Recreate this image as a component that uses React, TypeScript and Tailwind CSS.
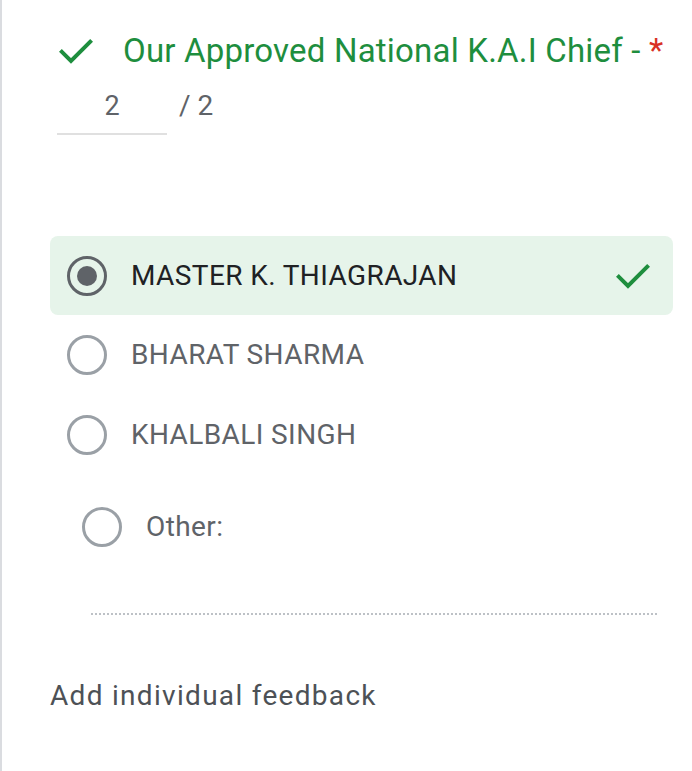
import React from 'react';

const Check = ({ className }: { className?: string }) => (
  <svg viewBox="0 0 24 24" className={className} fill="none" stroke="currentColor" strokeWidth={2.4} strokeLinecap="square">
    <path d="M3.5 12.5l5.5 5.5L20.5 6.5" />
  </svg>
);

const Radio = ({ checked }: { checked?: boolean }) => (
  <span
    className={`flex h-[40px] w-[40px] shrink-0 items-center justify-center rounded-full border-[3px] ${
      checked ? 'border-[#5f6368]' : 'border-[#9aa0a6]'
    }`}
  >
    {checked && <span className="h-[20px] w-[20px] rounded-full bg-[#5f6368]" />}
  </span>
);

const options = ['BHARAT SHARMA', 'KHALBALI SINGH'];

export default function App() {
  return (
    <div
      className="flex min-h-[771px] w-[692px] border-l-2 border-[#dadce0] bg-white"
      style={{ fontFamily: 'Roboto, "Liberation Sans", sans-serif' }}
    >
      <div className="flex w-full flex-col pl-[48px] pr-[19px]">
        {/* Question title */}
        <div className="mt-[31px] flex items-center pl-[6px]">
          <Check className="h-[40px] w-[40px] text-[#1e8e3e]" />
          <h2 className="ml-[27px] whitespace-nowrap text-[33px] leading-[36px] tracking-[0.2px] text-[#1e8e3e]">
            Our Approved National K.A.I Chief - <span className="text-[#d93025]">*</span>
          </h2>
        </div>

        {/* Points */}
        <div className="mt-[20px] flex items-start pl-[7px]">
          <div className="w-[110px] border-b-2 border-[#e0e0e0] pb-[12px] text-center text-[27px] leading-[30px] text-[#5f6368]">
            2
          </div>
          <span className="ml-[12px] text-[28px] leading-[30px] text-[#5f6368]">/ 2</span>
        </div>

        {/* Options */}
        <div className="mt-[101px] flex h-[79px] items-center rounded-[8px] bg-[#e6f4ea] pl-[17px] pr-[20px]">
          <Radio checked />
          <span className="ml-[24px] flex-1 text-[28px] tracking-[0.4px] text-[#202124]">MASTER K. THIAGRAJAN</span>
          <Check className="h-[40px] w-[40px] text-[#1e8e3e]" />
        </div>

        {options.map((o) => (
          <div key={o} className="flex h-[80px] items-center pl-[17px]">
            <Radio />
            <span className="ml-[24px] text-[28px] tracking-[0.4px] text-[#5f6368]">{o}</span>
          </div>
        ))}

        <div className="mt-[12px] flex h-[80px] items-center pl-[32px]">
          <Radio />
          <span className="ml-[24px] text-[28px] tracking-[0.4px] text-[#5f6368]">Other:</span>
        </div>

        <div className="ml-[41px] mr-[16px] mt-[46px] border-b-2 border-dotted border-[#bdc1c6]" />

        <div className="mt-[60px] text-[28px] tracking-[1.3px] text-[#4d5156]">Add individual feedback</div>
      </div>
    </div>
  );
}
